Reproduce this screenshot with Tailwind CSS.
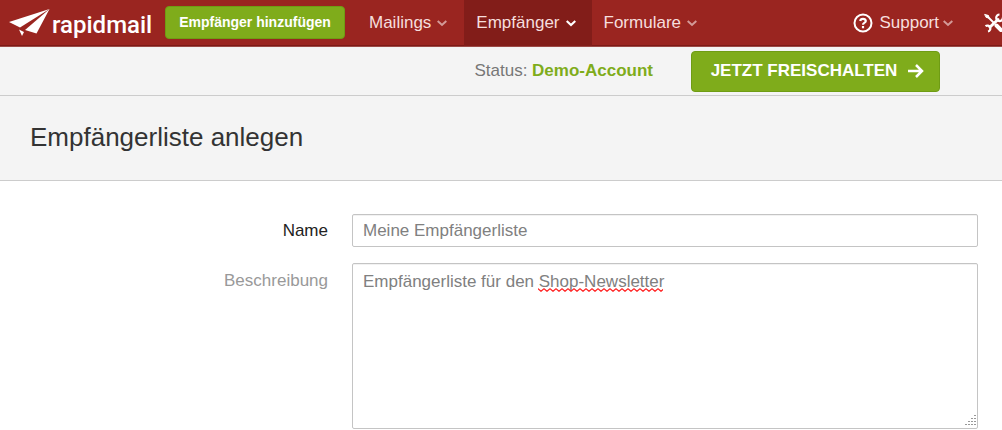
<!DOCTYPE html>
<html lang="de">
<head>
<meta charset="utf-8">
<meta name="viewport" content="width=device-width, initial-scale=1">
<title>Empfängerliste anlegen</title>
<script src="https://cdn.jsdelivr.net/npm/@tailwindcss/browser@4"></script>
</head>
<body class="bg-white font-['Liberation_Sans',Arial,sans-serif] text-[17px] text-[#333] overflow-x-hidden">
<header class="flex h-[47px] items-stretch overflow-hidden border-b border-[#9c4a46] bg-[#9a2520] text-[#f6dedd] shadow-[inset_0_-1px_0_#7d1a16]">
  <a href="#" class="flex w-[165px] shrink-0 items-center pl-[9px] text-white">
    <svg class="h-[28px] w-[41px] shrink-0" viewBox="0 0 41 28" fill="currentColor" aria-hidden="true">
      <path d="M0 13 40.500 0 11 18.500Z"/>
      <path d="M40.500 0 16 21 27.500 24.500Z"/>
      <path d="M10 20.500 15 23 13 27Z"/>
    </svg>
    <span class="ml-0.5 pt-1 font-[Roboto,sans-serif] text-[24px] leading-none font-medium">rapidmail</span>
  </a>
  <button type="button" class="mt-1.5 h-[33px] w-[180px] shrink-0 rounded border border-[#6f9c14] bg-[#7fac1b] text-[14px] font-bold whitespace-nowrap text-white">Empfänger hinzufügen</button>
  <nav class="flex shrink-0" aria-label="Hauptnavigation">
    <a href="#" class="flex items-center gap-1.5 pr-[17px] pl-6">Mailings
      <svg class="h-2 w-2.5" viewBox="0 0 10 8" fill="none" stroke="#d39a97" stroke-width="2" aria-hidden="true"><path d="M.7 2 5 6l4.300-4"/></svg></a>
    <a href="#" class="flex items-center gap-1.5 bg-[#821d19] pr-4 pl-3" aria-current="page">Empfänger
      <svg class="h-2 w-2.5" viewBox="0 0 10 8" fill="none" stroke="#fff" stroke-width="2.200" aria-hidden="true"><path d="M.7 2 5 6l4.300-4"/></svg></a>
    <a href="#" class="flex items-center gap-1.5 pr-4 pl-3">Formulare
      <svg class="h-2 w-2.5" viewBox="0 0 10 8" fill="none" stroke="#d39a97" stroke-width="2" aria-hidden="true"><path d="M.7 2 5 6l4.300-4"/></svg></a>
  </nav>
  <nav class="ml-auto flex shrink-0" aria-label="Hilfe und Einstellungen">
    <a href="#" class="flex items-center pr-[31px]">
      <svg class="mr-1.5 size-5" viewBox="0 0 20 20" fill="none" stroke="#fff" stroke-width="2" aria-hidden="true"><circle cx="10" cy="10" r="8.500"/><path d="M7.200 8Q7.500 5.800 10 5.800T12.800 8Q12.800 9.100 11.300 9.900 10 10.600 10 11.700M10 13v2.200" stroke-width="2.200"/></svg>
      Support
      <svg class="ml-1 h-2 w-2.5" viewBox="0 0 10 8" fill="none" stroke="#d39a97" stroke-width="2" aria-hidden="true"><path d="M.7 2 5 6l4.300-4"/></svg></a>
    <a href="#" class="-mr-0.5 flex items-center" aria-label="Einstellungen">
      <svg class="size-5" viewBox="0 0 20 20" fill="none" stroke="#fff" stroke-linecap="round" aria-hidden="true">
        <path d="M3 3 9.500 9.500" stroke-width="1.800"/><path d="M1 1.500 4.500 2.500 5 5 2.500 4.500z" fill="#fff" stroke-width="1"/>
        <path d="M12.500 12.500 17 17" stroke-width="4"/>
        <path d="M6 14 14 6.500" stroke-width="3"/>
        <path d="M1.500 13.200A3 3 0 1 1 4 18.500M18.800 4.500A3.300 3.300 0 1 1 15.500 1.500" stroke-width="2.200" stroke-linecap="butt"/>
      </svg></a>
  </nav>
</header>
<section class="flex h-[49px] items-center justify-end border-b border-[#ccc] bg-[#f4f4f4] pr-[62px]" aria-label="Kontostatus">
  <p class="text-[#777]">Status: <strong class="text-[#7fac1b]">Demo-Account</strong></p>
  <button type="button" class="ml-[38px] flex h-[41px] w-[249px] items-center justify-center gap-2.5 rounded border border-[#6f9c14] bg-[#7fac1b] pl-1 font-bold whitespace-nowrap text-white">JETZT FREISCHALTEN
    <svg class="h-4 w-[17px]" viewBox="0 0 17 16" fill="none" stroke="currentColor" stroke-width="2.500" aria-hidden="true"><path d="M1 8h14M9 2l6 6-6 6"/></svg></button>
</section>
<section class="flex h-[85px] items-center border-b border-[#ccc] bg-[#f4f4f4] px-[30px] pb-0.5">
  <h1 class="text-[26px] leading-8">Empfängerliste anlegen</h1>
</section>
<form class="grid grid-cols-[328px_1fr] gap-x-6 gap-y-4 pt-[33px] pr-6">
  <label for="name" class="pt-[5px] text-right leading-6 text-[#222]">Name</label>
  <input id="name" type="text" value="Meine Empfängerliste" class="h-[33px] w-full rounded-xs border border-[#c4c4c4] px-2.5 text-[#808080] inset-shadow-2xs outline-none">
  <label for="description" class="pt-1.5 text-right leading-6 text-[#999]">Beschreibung</label>
  <div class="relative">
    <textarea id="description" spellcheck="false" class="block h-[166px] w-full resize-none rounded-xs border border-[#c4c4c4] px-2.5 py-1.5 leading-6 text-[#808080] inset-shadow-2xs outline-none">Empfängerliste für den Shop-Newsletter</textarea>
    <svg class="pointer-events-none absolute top-[25px] left-[186px] h-1 w-[125px]" aria-hidden="true">
      <defs><pattern id="wave" width="6" height="4" patternUnits="userSpaceOnUse"><path d="M-1 -.3 0 .7 3 3.300 6 .7 7 -.3" fill="none" stroke="#f22" stroke-width="1.200"/></pattern></defs>
      <rect width="125" height="4" fill="url(#wave)"/>
    </svg>
    <svg class="pointer-events-none absolute right-0.5 bottom-0.5 size-3" viewBox="0 0 12 12" fill="#999" aria-hidden="true">
      <path d="M10 0h2v1h-2zM7 3h2v1H7zM10 3h2v1h-2zM4 6h2v1H4zM7 6h2v1H7zM10 6h2v1h-2zM1 9h2v1H1zM4 9h2v1H4zM7 9h2v1H7zM10 9h2v1h-2z"/>
    </svg>
  </div>
</form>
</body>
</html>
